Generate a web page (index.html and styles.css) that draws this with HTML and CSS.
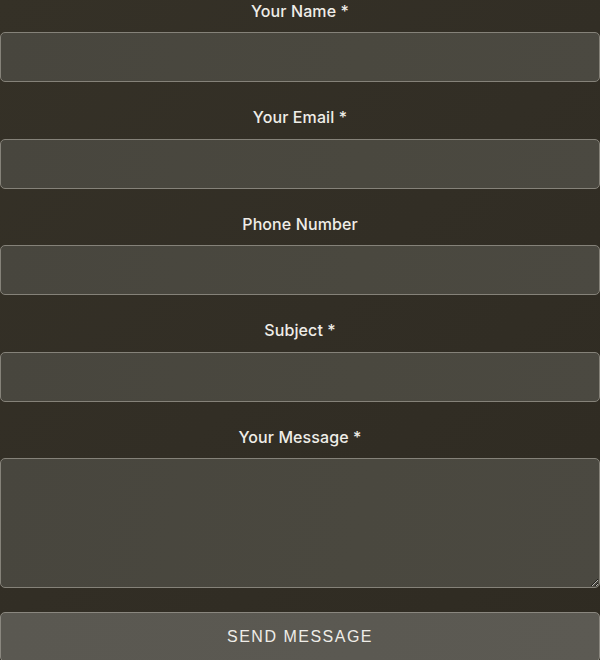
FILE: index.html
```html
<!DOCTYPE html>
<html lang="en">
<head>
<meta charset="utf-8">
<title>Contact</title>
<link rel="stylesheet" href="styles.css">
</head>
<body>
<form class="contact-form">
  <div class="field">
    <label class="field-label" for="name">Your Name *</label>
    <input class="field-input" id="name" type="text">
  </div>
  <div class="field">
    <label class="field-label" for="email">Your Email *</label>
    <input class="field-input" id="email" type="email">
  </div>
  <div class="field">
    <label class="field-label" for="phone">Phone Number</label>
    <input class="field-input" id="phone" type="tel">
  </div>
  <div class="field">
    <label class="field-label" for="subject">Subject *</label>
    <input class="field-input" id="subject" type="text">
  </div>
  <div class="field">
    <label class="field-label" for="message">Your Message *</label>
    <textarea class="field-input field-textarea" id="message"></textarea>
  </div>
  <button class="send-btn" type="button">SEND MESSAGE</button>
</form>
</body>
</html>
```
FILE: styles.css
```css
html, body {
  margin: 0;
  padding: 0;
}
body {
  background: linear-gradient(135deg, #353127 0%, #322e25 50%, #2f2b22 100%);
  min-height: 660px;
  font-family: Inter, "Noto Sans", sans-serif;
}
.contact-form {
  display: flex;
  flex-direction: column;
}
.field {
  display: flex;
  flex-direction: column;
  margin-bottom: 24px;
}
.field-label {
  display: block;
  text-align: center;
  color: #efede8;
  font-size: 16px;
  font-weight: 500;
  letter-spacing: 0.1px;
  line-height: 22.4px;
  margin-bottom: 10px;
}
.field-input {
  box-sizing: border-box;
  display: block;
  width: 100%;
  height: 50px;
  margin: 0;
  border: 1px solid #858279;
  border-radius: 5px;
  background: linear-gradient(100deg, #48463e 0%, #4a483f 60%, #4b4941 100%);
  color: #ebe9e3;
  font-family: Inter, sans-serif;
  font-size: 16px;
  padding: 0 12px;
  outline: none;
}
.field-textarea {
  height: 130px;
  resize: vertical;
  padding: 12px;
}
.send-btn {
  box-sizing: border-box;
  width: 100%;
  height: 50px;
  margin: 0;
  border: 1px solid #8a877f;
  border-radius: 5px;
  background: linear-gradient(100deg, #5a5851 0%, #5b5952 60%, #5c5a53 100%);
  color: #efede8;
  font-family: "Liberation Sans", Arial, sans-serif;
  font-size: 16px;
  letter-spacing: 1.5px;
  cursor: pointer;
}
```
